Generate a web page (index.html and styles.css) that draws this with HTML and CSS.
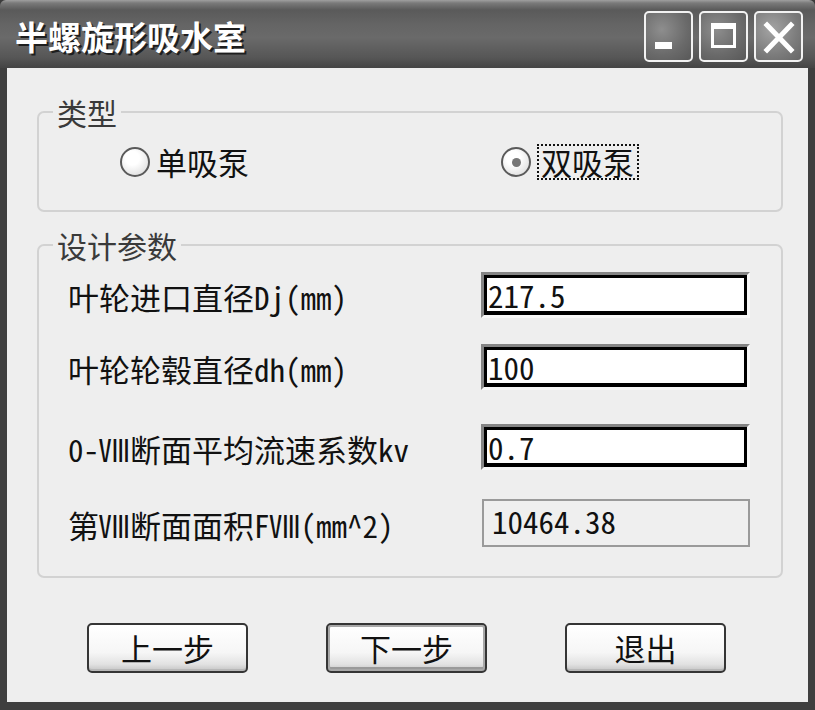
FILE: index.html
```html
<!DOCTYPE html>
<html lang="zh-CN">
<head>
<meta charset="utf-8">
<title>半螺旋形吸水室</title>
<link rel="stylesheet" href="styles.css">
</head>
<body>
<div class="window">
  <div class="titlebar">
    <div class="title">半螺旋形吸水室</div>
    <div class="wbtns">
      <div class="wbtn">
        <svg viewBox="0 0 45 47" width="45" height="47"><rect x="9" y="29" width="17" height="7" fill="#fff"/></svg>
      </div>
      <div class="wbtn">
        <svg viewBox="0 0 45 47" width="45" height="47"><rect x="11.5" y="11.5" width="22" height="22" fill="none" stroke="#fff" stroke-width="3"/><rect x="10" y="10" width="25" height="6" fill="#fff"/></svg>
      </div>
      <div class="wbtn close">
        <svg viewBox="0 0 45 47" width="45" height="47"><path d="M11 12 L35 37 M35 12 L11 37" stroke="#fff" stroke-width="5" stroke-linecap="square"/></svg>
      </div>
    </div>
  </div>
  <div class="client">
    <fieldset class="group g1">
      <legend>类型</legend>
      <div class="radios">
        <label class="radio"><span class="circle"></span><span>单吸泵</span></label>
        <label class="radio"><span class="circle checked"></span><span class="focus">双吸泵</span></label>
      </div>
    </fieldset>
    <fieldset class="group g2">
      <legend>设计参数</legend>
      <div class="rows">
        <div class="row r1"><span class="lbl">叶轮进口直径Dj(mm)</span><div class="edit"><div class="edit-in">217.5</div></div></div>
        <div class="row r2"><span class="lbl">叶轮轮毂直径dh(mm)</span><div class="edit"><div class="edit-in">100</div></div></div>
        <div class="row r3"><span class="lbl">0-Ⅷ断面平均流速系数kv</span><div class="edit"><div class="edit-in">0.7</div></div></div>
        <div class="row r4"><span class="lbl">第Ⅷ断面面积FⅧ(mm^2)</span><div class="ro">10464.38</div></div>
      </div>
    </fieldset>
    <div class="buttons">
      <div class="btn">上一步</div>
      <div class="btn default">下一步</div>
      <div class="btn">退出</div>
    </div>
  </div>
</div>
</body>
</html>
```
FILE: styles.css
```css
* { box-sizing: border-box; }
html, body { margin: 0; padding: 0; }
body {
  width: 815px;
  height: 710px;
  overflow: hidden;
  background: #3c3c3c;
  font-family: "Noto Sans Mono CJK SC", "Noto Sans CJK SC", sans-serif;
}
.window {
  width: 815px;
  height: 710px;
  background: #3f3f3f;
  display: flex;
  flex-direction: column;
  border-radius: 6px 6px 0 0;
  overflow: hidden;
}
.titlebar {
  height: 68px;
  flex: none;
  display: flex;
  align-items: center;
  background: linear-gradient(#a0a0a0 0, #7a7a7a 3px, #5a5a5a 10px, #646464 35%, #6a6a6a 55%, #565656 85%, #444 100%);
  padding: 0 12px 0 15px;
}
.title {
  font-family: "Noto Sans CJK SC", sans-serif;
  font-weight: 700;
  font-size: 33px;
  line-height: 40px;
  color: #fff;
  margin-top: 4px;
  text-shadow: 2px 2px 0 #1e1e1e;
}
.wbtns {
  margin-left: auto;
  align-self: flex-start;
  margin-top: 11px;
  display: flex;
  gap: 6px;
}
.wbtn {
  width: 49px;
  height: 51px;
  border: 2px solid #f2f2f2;
  border-radius: 5px;
  background: radial-gradient(circle at 35% 35%, #8e8e8e, #6a6a6a 60%, #585858);
}
.wbtn svg { display: block; }
.wbtn.close {
  background: radial-gradient(circle at 35% 35%, #a4a4a4, #7c7c7c 60%, #666);
}
.client {
  flex: none;
  height: 634px;
  margin: 0 7px;
  background: #eeeeee;
  display: flex;
  flex-direction: column;
}
.group {
  margin: 0 25px 0 30px;
  padding: 0;
  border: 2px solid #d2d2d2;
  border-radius: 7px;
  min-width: 0;
}
.group legend {
  margin-left: 14px;
  padding: 0 4px;
  font-size: 30px;
  line-height: 34px;
  color: #3a3a3a;
}
.g1 { margin-top: 27px; }
.radios {
  height: 66px;
  margin-bottom: 15px;
  display: flex;
  align-items: center;
  padding-left: 81px;
  gap: 252px;
}
.radio {
  display: flex;
  align-items: center;
  gap: 6px;
  font-size: 31px;
  line-height: 36px;
  color: #111;
}
.circle {
  width: 30px;
  height: 30px;
  border-radius: 50%;
  border: 2px solid #5a5a5a;
  background: radial-gradient(circle at 40% 35%, #ffffff 30%, #e4e4e4 75%, #c8c8c8);
  display: flex;
  align-items: center;
  justify-content: center;
}
.circle.checked::after {
  content: "";
  width: 9px;
  height: 9px;
  border-radius: 50%;
  background: #777;
}
.focus {
  border: 2px dotted #111;
  padding: 0 3px 0 2px;
  line-height: 32px;
}
.g2 { margin-top: 16px; }
.rows {
  padding: 10px 31px 30px 29px;
  display: flex;
  flex-direction: column;
}
.row {
  height: 46px;
  display: flex;
  align-items: center;
}
.r2 { margin-top: 26px; }
.r3 { margin-top: 34px; }
.r4 { margin-top: 30px; }
.lbl {
  font-size: 31px;
  line-height: 36px;
  color: #111;
  margin-top: 4px;
}
.edit {
  margin-left: auto;
  width: 269px;
  height: 46px;
  border: 3px solid;
  border-color: #858585 #f8f8f8 #f8f8f8 #858585;
}
.edit-in {
  height: 100%;
  border: 3px solid #000;
  border-bottom-width: 4px;
  background: #fff;
  font-size: 31px;
  line-height: 33px;
  padding-left: 1px;
  color: #111;
}
.ro {
  margin-left: auto;
  width: 268px;
  height: 48px;
  border: 2px solid #9a9a9a;
  background: #efefef;
  font-size: 31px;
  line-height: 40px;
  padding-left: 8px;
  color: #111;
}
.buttons {
  margin-top: 45px;
  display: flex;
  gap: 78px;
  padding-left: 80px;
}
.btn {
  width: 161px;
  height: 50px;
  border: 2px solid #353535;
  border-radius: 5px;
  background: linear-gradient(#ffffff, #f6f6f6 60%, #e2e2e2 85%, #c4c4c4);
  box-shadow: inset 0 -2px 0 #b8b8b8;
  display: flex;
  align-items: center;
  justify-content: center;
  font-size: 31px;
  line-height: 36px;
  color: #111;
}
.btn.default {
  box-shadow: inset 0 0 0 2px #a8a8a8, inset 0 -4px 0 #9a9a9a;
}
```
